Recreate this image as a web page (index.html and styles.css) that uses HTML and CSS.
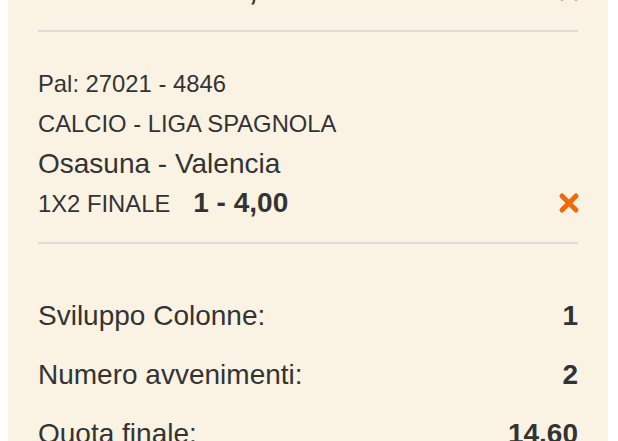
FILE: index.html
```html
<!DOCTYPE html>
<html>
<head>
	<meta charset="UTF-8">
	<title>Schedina</title>
	<link rel="stylesheet" href="styles.css">
</head>
<body>
	<div class="coupon">
		<div class="bet">
			<div class="bet-line">Pal: 27021 - 4837</div>
			<div class="bet-line">CALCIO - LIGA SPAGNOLA</div>
			<div class="bet-line bet-match">Real Madrid - Siviglia</div>
			<div class="bet-line bet-odds">
				<span class="bet-type">1X2 FINALE</span>
				<span class="bet-value">1 - 3,00</span>
				<button class="bet-remove" type="button">
					<svg width="22" height="22" viewBox="0 0 22 22"><path d="M4 4 L18 18 M18 4 L4 18" stroke="#ef6a0c" stroke-width="5" stroke-linecap="round" fill="none"/></svg>
				</button>
			</div>
		</div>
		<div class="bet">
			<div class="bet-line">Pal: 27021 - 4846</div>
			<div class="bet-line">CALCIO - LIGA SPAGNOLA</div>
			<div class="bet-line bet-match">Osasuna - Valencia</div>
			<div class="bet-line bet-odds">
				<span class="bet-type">1X2 FINALE</span>
				<span class="bet-value">1 - 4,00</span>
				<button class="bet-remove" type="button">
					<svg width="22" height="22" viewBox="0 0 22 22"><path d="M4 4 L18 18 M18 4 L4 18" stroke="#ef6a0c" stroke-width="5" stroke-linecap="round" fill="none"/></svg>
				</button>
			</div>
		</div>
		<div class="summary">
			<div class="summary-row">
				<span>Sviluppo Colonne:</span>
				<span class="summary-value">1</span>
			</div>
			<div class="summary-row">
				<span>Numero avvenimenti:</span>
				<span class="summary-value">2</span>
			</div>
			<div class="summary-row">
				<span>Quota finale:</span>
				<span class="summary-value">14.60</span>
			</div>
		</div>
	</div>
</body>
</html>
```

FILE: styles.css
```css
html, body {
	height: 100%;
	overflow: hidden;
}
body {
	margin: 0;
	padding: 0;
	background-color: #fff;
	font-family: "Liberation Sans", Arial, Helvetica, sans-serif;
	color: #333;
}
.coupon {
	width: 540px;
	margin: -180px 0 0 8px;
	padding: 0 30px 40px;
	background-color: #faf3e3;
}
.bet {
	padding: 32px 0 18px;
	border-bottom: 2px solid #dedbd4;
}
.bet-line {
	height: 40px;
	line-height: 40px;
	font-size: 23.8px;
	white-space: nowrap;
}
.bet-match {
	font-size: 28px;
}
.bet-odds {
	display: flex;
	align-items: baseline;
}
.bet-value {
	margin-left: 23px;
	font-size: 28px;
	line-height: 36px;
	font-weight: bold;
}
.bet-remove {
	margin: -3px -2px 0 auto;
	padding: 0;
	border: none;
	background: none;
	cursor: pointer;
	align-self: center;
	display: flex;
}
.summary {
	padding-top: 42px;
}
.summary-row {
	display: flex;
	justify-content: space-between;
	height: 59px;
	line-height: 59px;
	font-size: 28px;
}
.summary-value {
	font-weight: bold;
}
```
